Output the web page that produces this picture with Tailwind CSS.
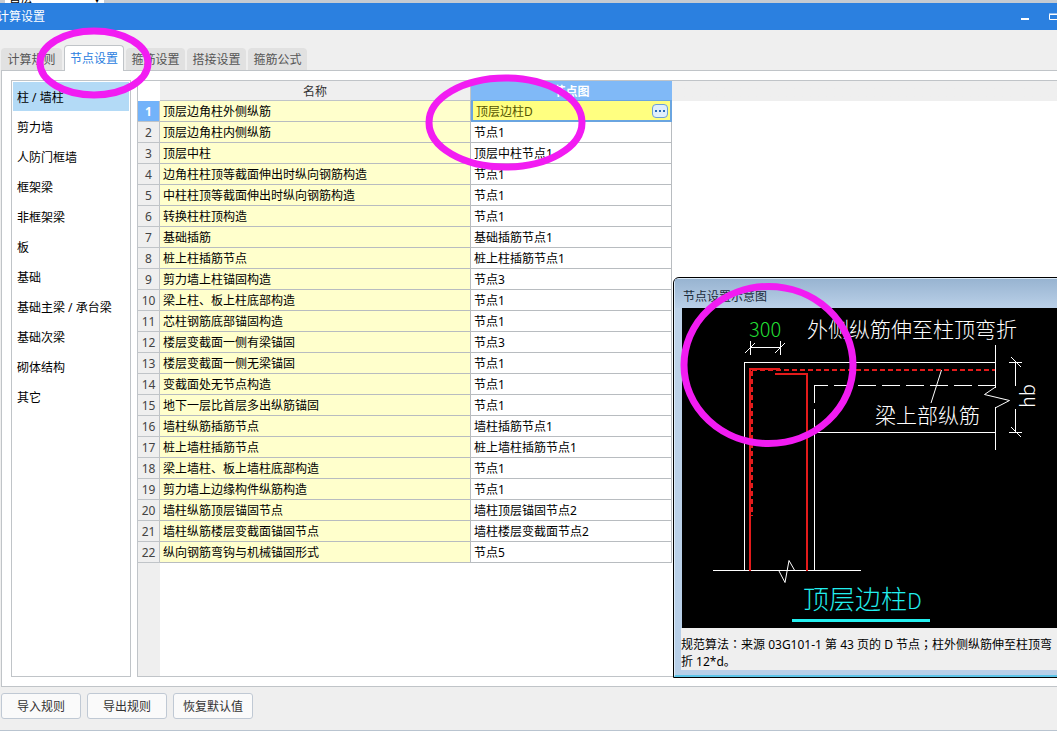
<!DOCTYPE html>
<html lang="zh-CN">
<head>
<meta charset="utf-8">
<meta name="viewport" content="width=device-width, initial-scale=1">
<title>计算设置</title>
<script src="https://cdn.jsdelivr.net/npm/@tailwindcss/browser@4"></script>
</head>
<body class="relative flex h-screen flex-col overflow-hidden bg-[#efefef] font-['Noto_Sans','Noto_Sans_CJK_SC',sans-serif] text-xs text-black">

<!-- Edge of the toolbar behind the dialog -->
<div class="flex h-[3px] shrink-0 items-end overflow-hidden bg-[#c5cbd2] pl-[5px]">
  <div class="flex w-[99px] justify-between overflow-hidden bg-white px-1 leading-[9px]"><span>首层</span><span>▾</span></div>
</div>

<header class="flex h-[27px] shrink-0 items-center justify-between bg-[#2b80e0] text-white">
  <h1 class="-ml-[3px]">计算设置</h1>
  <div class="-mr-1 flex items-center gap-[18px]">
    <button type="button" aria-label="最小化" class="flex h-5 w-3 items-center justify-center"><svg class="h-3 w-3" viewBox="0 0 12 12"><path d="M2 8h8" stroke="currentColor" stroke-width="2"/></svg></button>
    <button type="button" aria-label="最大化" class="flex h-5 w-3 items-center justify-center"><svg class="h-3 w-3" viewBox="0 0 12 12"><path d="M0.500 3.500h11v5h-11z M0 3h12" fill="none" stroke="currentColor" stroke-width="1"/></svg></button>
  </div>
</header>

<nav class="flex h-10 shrink-0 items-end gap-[2px] pl-px text-[#555]">
  <button type="button" class="h-[22px] w-[61px] rounded-t-sm bg-[#e1e1e1] pt-[2px]">计算规则</button>
  <button type="button" class="relative -mb-px h-[26px] w-[60px] rounded-t border border-b-0 border-[#c0c4c8] bg-white pt-px text-[#2b80e0]">节点设置</button>
  <button type="button" class="h-[22px] w-[59px] rounded-t-sm bg-[#e1e1e1] pt-[2px]">箍筋设置</button>
  <button type="button" class="h-[22px] w-[59px] rounded-t-sm bg-[#e1e1e1] pt-[2px]">搭接设置</button>
  <button type="button" class="h-[22px] w-[59px] rounded-t-sm bg-[#e1e1e1] pt-[2px]">箍筋公式</button>
</nav>

<main class="ml-px flex min-h-0 flex-1 gap-[6px] border border-r-0 border-[#c0c4c8] bg-white py-[9px] pl-[9px]">
  <ul class="w-[120px] shrink-0 border border-[#c0c4c8] p-px">
    <li class="mb-px"><button type="button" class="h-[29px] w-full bg-[#b3daf6] pt-[2px] pl-1 text-left">柱 / 墙柱</button></li>
    <li><button type="button" class="h-[30px] w-full pt-[2px] pl-1 text-left">剪力墙</button></li>
    <li><button type="button" class="h-[30px] w-full pt-[2px] pl-1 text-left">人防门框墙</button></li>
    <li><button type="button" class="h-[30px] w-full pt-[2px] pl-1 text-left">框架梁</button></li>
    <li><button type="button" class="h-[30px] w-full pt-[2px] pl-1 text-left">非框架梁</button></li>
    <li><button type="button" class="h-[30px] w-full pt-[2px] pl-1 text-left">板</button></li>
    <li><button type="button" class="h-[30px] w-full pt-[2px] pl-1 text-left">基础</button></li>
    <li><button type="button" class="h-[30px] w-full pt-[2px] pl-1 text-left">基础主梁 / 承台梁</button></li>
    <li><button type="button" class="h-[30px] w-full pt-[2px] pl-1 text-left">基础次梁</button></li>
    <li><button type="button" class="h-[30px] w-full pt-[2px] pl-1 text-left">砌体结构</button></li>
    <li><button type="button" class="h-[30px] w-full pt-[2px] pl-1 text-left">其它</button></li>
  </ul>

  <section class="flex min-w-0 flex-1 flex-col border border-r-0 border-[#c0c4c8]">
    <div class="bg-linear-to-b from-[#efefef] from-[20px] to-transparent to-[20px]">
    <table class="w-[534px] table-fixed border-separate border-spacing-0 text-left
      [&_tbody_th]:h-[21px] [&_tbody_th]:border-r [&_tbody_th]:border-b [&_tbody_th]:border-[#c0c4c8] [&_tbody_th]:bg-[#efefef] [&_tbody_th]:p-0 [&_tbody_th]:pt-[2px] [&_tbody_th]:text-center [&_tbody_th]:font-normal [&_tbody_th]:text-[#444]
      [&_td]:h-[21px] [&_td]:border-r [&_td]:border-b [&_td]:border-[#b8bcc0] [&_td]:p-0 [&_td]:pt-[2px] [&_td]:pl-[3px] [&_td:nth-child(2)]:bg-[#ffffcc]">
      <colgroup><col class="w-[22px]"><col class="w-[311px]"><col class="w-[201px]"></colgroup>
      <thead>
        <tr class="h-5 text-center leading-4">
          <td class="!h-5 !border-0 bg-white"></td>
          <th scope="col" class="border-r border-b border-[#c0c4c8] bg-[#efefef] p-0 pt-[2px] font-normal text-[#333]">名称</th>
          <th scope="col" class="border-b border-[#6aa5e0] bg-[#80b9f7] p-0 pt-[2px] font-bold text-white">节点图</th>
        </tr>
      </thead>
      <tbody>
        <tr><th scope="row" class="!bg-[#73b3fa] !font-bold !text-white">1</th><td>顶层边角柱外侧纵筋</td>
          <td class="!border-0 !bg-[#ffff80] !p-0"><div class="flex h-[21px] items-center justify-between border-2 border-t-0 border-[#6aa5e0] pr-[2px] pl-[3px] text-[#555500]"><span class="pt-[2px]">顶层边柱D</span><button type="button" aria-label="选择节点图" class="flex h-[14px] w-4 items-center justify-center rounded-sm border border-[#6b9fd8] bg-[#e0effd]"><svg class="h-2 w-3" viewBox="0 0 12 8" shape-rendering="crispEdges"><path d="M1 4h2M5 4h2M9 4h2" stroke="#2b6cb8" stroke-width="2"/></svg></button></div></td></tr>
        <tr><th scope="row">2</th><td>顶层边角柱内侧纵筋</td><td>节点1</td></tr>
        <tr><th scope="row">3</th><td>顶层中柱</td><td>顶层中柱节点1</td></tr>
        <tr><th scope="row">4</th><td>边角柱柱顶等截面伸出时纵向钢筋构造</td><td>节点1</td></tr>
        <tr><th scope="row">5</th><td>中柱柱顶等截面伸出时纵向钢筋构造</td><td>节点1</td></tr>
        <tr><th scope="row">6</th><td>转换柱柱顶构造</td><td>节点1</td></tr>
        <tr><th scope="row">7</th><td>基础插筋</td><td>基础插筋节点1</td></tr>
        <tr><th scope="row">8</th><td>桩上柱插筋节点</td><td>桩上柱插筋节点1</td></tr>
        <tr><th scope="row">9</th><td>剪力墙上柱锚固构造</td><td>节点3</td></tr>
        <tr><th scope="row">10</th><td>梁上柱、板上柱底部构造</td><td>节点1</td></tr>
        <tr><th scope="row">11</th><td>芯柱钢筋底部锚固构造</td><td>节点1</td></tr>
        <tr><th scope="row">12</th><td>楼层变截面一侧有梁锚固</td><td>节点3</td></tr>
        <tr><th scope="row">13</th><td>楼层变截面一侧无梁锚固</td><td>节点1</td></tr>
        <tr><th scope="row">14</th><td>变截面处无节点构造</td><td>节点1</td></tr>
        <tr><th scope="row">15</th><td>地下一层比首层多出纵筋锚固</td><td>节点1</td></tr>
        <tr><th scope="row">16</th><td>墙柱纵筋插筋节点</td><td>墙柱插筋节点1</td></tr>
        <tr><th scope="row">17</th><td>桩上墙柱插筋节点</td><td>桩上墙柱插筋节点1</td></tr>
        <tr><th scope="row">18</th><td>梁上墙柱、板上墙柱底部构造</td><td>节点1</td></tr>
        <tr><th scope="row">19</th><td>剪力墙上边缘构件纵筋构造</td><td>节点1</td></tr>
        <tr><th scope="row">20</th><td>墙柱纵筋顶层锚固节点</td><td>墙柱顶层锚固节点2</td></tr>
        <tr><th scope="row">21</th><td>墙柱纵筋楼层变截面锚固节点</td><td>墙柱楼层变截面节点2</td></tr>
        <tr><th scope="row">22</th><td>纵向钢筋弯钩与机械锚固形式</td><td>节点5</td></tr>
      </tbody>
    </table>
    </div>
    <div class="w-[22px] flex-1 bg-[#efefef]"></div>
  </section>
</main>

<footer class="flex h-11 shrink-0 items-start gap-[6px] border-b border-[#b9c4d0] pt-[6px] pl-px text-[#333]">
  <button type="button" class="h-[26px] w-20 rounded-[3px] border border-[#c0c9d4] bg-[#fafafa] pt-[2px]">导入规则</button>
  <button type="button" class="h-[26px] w-20 rounded-[3px] border border-[#c0c9d4] bg-[#fafafa] pt-[2px]">导出规则</button>
  <button type="button" class="h-[26px] w-20 rounded-[3px] border border-[#c0c9d4] bg-[#fafafa] pt-[2px]">恢复默认值</button>
</footer>

<!-- Floating preview window -->
<aside class="absolute top-[277px] -right-3 left-[673px] rounded-t-md border border-black bg-linear-to-b from-[#bdd2e8] from-[100px] to-[#b7cfe8]">
  <div class="rounded-t-md border border-[#dcebf8] border-b-2 border-b-[#5cc5e8] pb-[5px] pl-[7px]">
    <h2 class="-ml-[7px] flex h-[29px] items-center bg-linear-to-b from-[#98b4d1] to-[#bad0e8] pt-[6px] pl-2 text-[#1a2a3a]">节点设置示意图</h2>
    <svg class="block h-[320px] w-full bg-black" viewBox="682 308 386 320" preserveAspectRatio="xMinYMin slice" fill="none" stroke="#fff" stroke-width="1" role="img" aria-label="顶层边柱D">
      <g stroke="none" fill="#fff" class="font-['Noto_Sans_CJK_SC',sans-serif] font-light">
        <text x="749" y="337" font-size="20" fill="#22dd33">300</text>
        <text x="807" y="337" font-size="21">外侧纵筋伸至柱顶弯折</text>
        <text x="875" y="423" font-size="21">梁上部纵筋</text>
        <text x="803" y="609" font-size="26" fill="#22eeee">顶层边柱<tspan font-size="22">D</tspan></text>
        <text transform="translate(1035 408) rotate(-90)" font-size="20">hb</text>
      </g>
      <g shape-rendering="crispEdges">
        <path d="M750.500 341v14M780.500 341v14M750 347.500h31"/>
        <path d="M744.500 571V362.500H995M814.500 571V432.500H995M814.500 432v-23M814.500 403V385.500h13"/>
        <path d="M834 385.500H995" stroke-dasharray="18 6"/>
        <path d="M995.500 345v43M995.500 407v43M1015.500 362v24M1015.500 409v24M1009 362.500h13M1009 432.500h13"/>
        <path d="M713 570.500H861"/>
      </g>
      <path d="M745 353l10-10M775 353l10-10M941.500 370L931 403M995.500 387l-11 7.500 25 6-13.500 7M1011 357l10 10M1011 427l10 10M779 571l6 11.500 4-22 6 10.500"/>
      <g stroke="#e31b1b" stroke-width="2" shape-rendering="crispEdges">
        <path d="M750 571V369H780M775 374H807V571"/>
        <path d="M752 371V516" stroke-dasharray="5 3"/>
        <path d="M752 370H995" stroke-dasharray="5 3"/>
      </g>
      <path d="M792 620.500H930" stroke="#22eeee" stroke-width="3"/>
    </svg>
    <p class="-ml-px bg-[#efefef] pt-[7px] leading-[17px] whitespace-nowrap">规范算法<span class="font-['Noto_Sans_CJK_JP',sans-serif]" lang="ja">：</span>来源 03G101-1 第 43 页的 D 节点<span class="font-['Noto_Sans_CJK_JP',sans-serif]" lang="ja">；</span>柱外侧纵筋伸至柱顶弯<br>折 12*d。</p>
  </div>
</aside>

<!-- Hand-drawn highlight rings -->
<svg class="pointer-events-none absolute top-0 left-0 h-[460px] w-[870px]" viewBox="0 0 870 460" fill="none" stroke="#f21cf2" stroke-width="7" aria-hidden="true">
  <ellipse cx="94" cy="63" rx="54" ry="32"/>
  <ellipse cx="505.500" cy="122.500" rx="76.500" ry="44.500"/>
  <ellipse cx="768.500" cy="365" rx="84.500" ry="78.500"/>
</svg>
</body>
</html>
